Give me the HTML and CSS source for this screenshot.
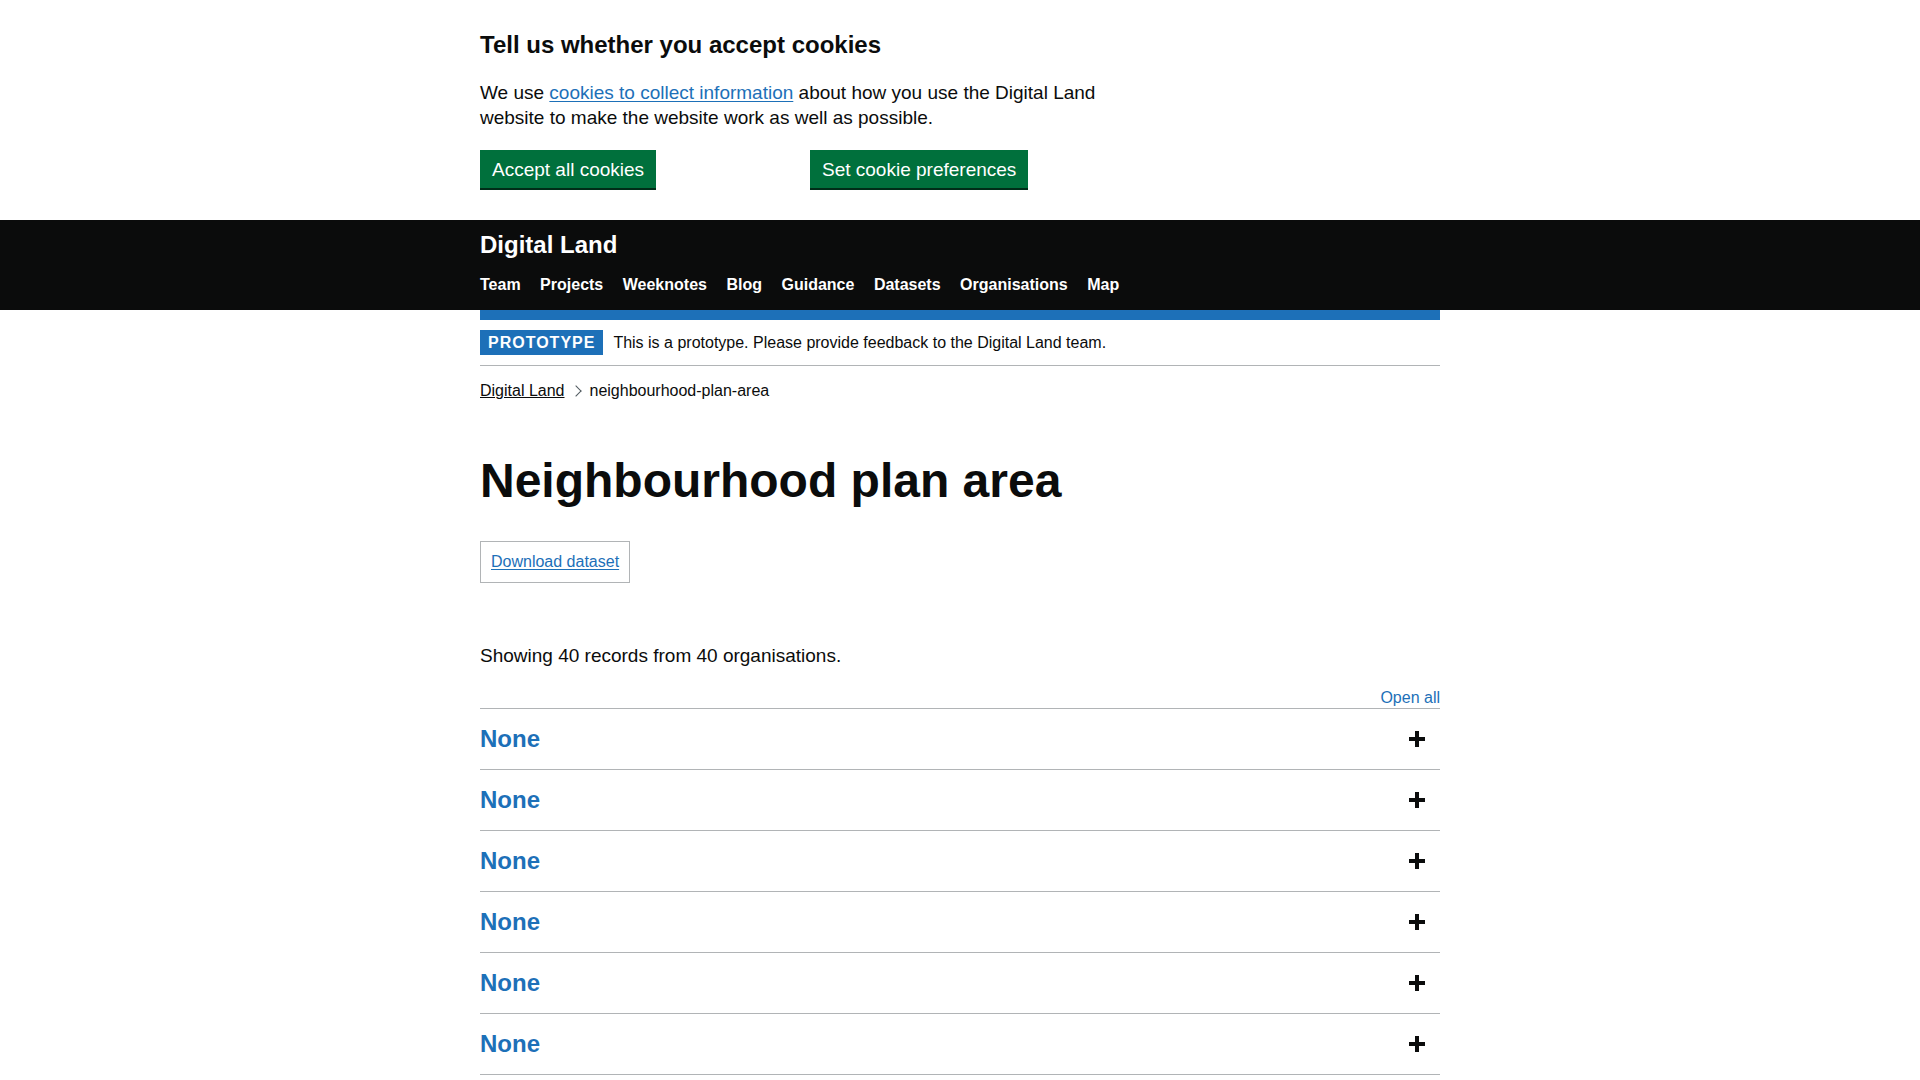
FILE: index.html
```html
<!DOCTYPE html>
<html lang="en">
<head>
<meta charset="utf-8">
<title>Neighbourhood plan area - Digital Land</title>
<link rel="stylesheet" href="styles.css">
</head>
<body>
<div class="cookie-banner">
  <div class="width-container">
    <div class="cookie-message">
      <h2 class="cookie-heading">Tell us whether you accept cookies</h2>
      <p class="body-text">We use <a class="link" href="#">cookies to collect information</a> about how you use the Digital Land website to make the website work as well as possible.</p>
    </div>
    <div class="cookie-buttons">
      <button class="button" type="button">Accept all cookies</button>
      <button class="button" type="button">Set cookie preferences</button>
    </div>
  </div>
</div>

<header class="header">
  <div class="width-container header-inner">
    <a class="product-name" href="#">Digital Land</a>
    <nav class="header-nav">
      <a href="#">Team</a>
      <a href="#">Projects</a>
      <a href="#">Weeknotes</a>
      <a href="#">Blog</a>
      <a href="#">Guidance</a>
      <a href="#">Datasets</a>
      <a href="#">Organisations</a>
      <a href="#">Map</a>
    </nav>
  </div>
</header>

<div class="width-container">
  <div class="phase-banner">
    <strong class="tag">Prototype</strong>
    <span class="phase-text">This is a prototype. Please provide feedback to the Digital Land team.</span>
  </div>

  <ol class="breadcrumbs">
    <li class="crumb"><a class="crumb-link" href="#">Digital Land</a></li>
    <li class="crumb">neighbourhood-plan-area</li>
  </ol>

  <main class="main">
    <h1 class="heading-xl">Neighbourhood plan area</h1>

    <div class="download-box"><a class="link" href="#">Download dataset</a></div>

    <p class="body-text summary">Showing 40 records from 40 organisations.</p>

    <div class="accordion">
      <div class="accordion-controls"><a class="open-all" href="#">Open all</a></div>
      <div class="accordion-section"><div class="section-header"><span class="section-title">None</span><svg class="plus" width="16" height="16" viewBox="0 0 16 16"><rect x="0" y="6" width="16" height="4"/><rect x="6" y="0" width="4" height="16"/></svg></div></div>
      <div class="accordion-section"><div class="section-header"><span class="section-title">None</span><svg class="plus" width="16" height="16" viewBox="0 0 16 16"><rect x="0" y="6" width="16" height="4"/><rect x="6" y="0" width="4" height="16"/></svg></div></div>
      <div class="accordion-section"><div class="section-header"><span class="section-title">None</span><svg class="plus" width="16" height="16" viewBox="0 0 16 16"><rect x="0" y="6" width="16" height="4"/><rect x="6" y="0" width="4" height="16"/></svg></div></div>
      <div class="accordion-section"><div class="section-header"><span class="section-title">None</span><svg class="plus" width="16" height="16" viewBox="0 0 16 16"><rect x="0" y="6" width="16" height="4"/><rect x="6" y="0" width="4" height="16"/></svg></div></div>
      <div class="accordion-section"><div class="section-header"><span class="section-title">None</span><svg class="plus" width="16" height="16" viewBox="0 0 16 16"><rect x="0" y="6" width="16" height="4"/><rect x="6" y="0" width="4" height="16"/></svg></div></div>
      <div class="accordion-section"><div class="section-header"><span class="section-title">None</span><svg class="plus" width="16" height="16" viewBox="0 0 16 16"><rect x="0" y="6" width="16" height="4"/><rect x="6" y="0" width="4" height="16"/></svg></div></div>
      <div class="accordion-section"><div class="section-header"><span class="section-title">None</span><svg class="plus" width="16" height="16" viewBox="0 0 16 16"><rect x="0" y="6" width="16" height="4"/><rect x="6" y="0" width="4" height="16"/></svg></div></div>
      <div class="accordion-section"><div class="section-header"><span class="section-title">None</span><svg class="plus" width="16" height="16" viewBox="0 0 16 16"><rect x="0" y="6" width="16" height="4"/><rect x="6" y="0" width="4" height="16"/></svg></div></div>
    </div>
  </main>
</div>
</body>
</html>
```

FILE: styles.css
```css
* { box-sizing: border-box; }

html, body {
  margin: 0;
  padding: 0;
  background: #ffffff;
}

body {
  font-family: "Liberation Sans", Arial, sans-serif;
  color: #0b0c0c;
}

.width-container {
  width: 960px;
  margin: 0 auto;
}

.link {
  color: #1d70b8;
  text-decoration: underline;
  text-decoration-thickness: 1px;
  text-underline-offset: 0.1em;
}

.body-text {
  font-size: 19px;
  line-height: 25px;
  margin: 0;
}

/* Cookie banner */
.cookie-banner {
  padding: 30px 0 30px;
  background: #ffffff;
}

.cookie-message {
  width: 640px;
}

.cookie-heading {
  font-size: 24px;
  line-height: 30px;
  font-weight: 700;
  margin: 0 0 20px;
}

.cookie-message .body-text {
  margin-bottom: 20px;
}

.cookie-buttons {
  display: grid;
  grid-template-columns: repeat(3, 1fr);
  column-gap: 30px;
  justify-items: start;
}

.button {
  font-family: "Liberation Sans", Arial, sans-serif;
  font-size: 19px;
  line-height: 1;
  color: #ffffff;
  background: #00703c;
  border: 2px solid transparent;
  border-radius: 0;
  padding: 8px 10px 7px;
  box-shadow: 0 2px 0 #002d18;
  margin: 0 0 2px;
  cursor: pointer;
}

/* Header */
.header {
  background: #0b0c0c;
  color: #ffffff;
}

.header-inner {
  padding: 10px 0 15px;
  display: flex;
  flex-direction: column;
  align-items: flex-start;
  gap: 15px;
}

.product-name {
  color: #ffffff;
  text-decoration: none;
  font-size: 24px;
  line-height: 30px;
  font-weight: 700;
}

.header-nav {
  display: flex;
  gap: 19.5px;
}

.header-nav a {
  color: #ffffff;
  text-decoration: none;
  font-size: 16px;
  line-height: 20px;
  font-weight: 700;
}

/* Phase banner */
.phase-banner {
  border-top: 10px solid #1d70b8;
  border-bottom: 1px solid #b1b4b6;
  padding: 10px 0;
  display: flex;
  align-items: center;
  gap: 10px;
}

.tag {
  display: inline-block;
  background: #1d70b8;
  color: #ffffff;
  font-size: 16px;
  line-height: 16px;
  font-weight: 700;
  letter-spacing: 1px;
  text-transform: uppercase;
  padding: 5px 8px 4px;
}

.phase-text {
  font-size: 16px;
  line-height: 20px;
}

/* Breadcrumbs */
.breadcrumbs {
  list-style: none;
  margin: 15px 0 0;
  padding: 0;
  display: flex;
  font-size: 16px;
  line-height: 20px;
}

.crumb {
  position: relative;
}

.crumb + .crumb {
  margin-left: 10px;
  padding-left: 15px;
}

.crumb + .crumb::before {
  content: "";
  position: absolute;
  top: 0;
  bottom: 0;
  left: -3px;
  width: 7px;
  height: 7px;
  margin: auto 0;
  transform: rotate(45deg);
  border-style: solid;
  border-color: #505a5f;
  border-width: 1px 1px 0 0;
}

.crumb-link {
  color: #0b0c0c;
  text-decoration: underline;
  text-decoration-thickness: 1px;
}

/* Main */
.main {
  display: flex;
  flex-direction: column;
  align-items: flex-start;
}

.heading-xl {
  font-size: 48px;
  line-height: 50px;
  font-weight: 700;
  margin: 55px 0 35px;
}

.download-box {
  border: 1px solid #b1b4b6;
  padding: 10px;
  font-size: 16px;
  line-height: 20px;
}

.summary {
  margin: 60px 0 20px;
}

/* Accordion */
.accordion {
  align-self: stretch;
}

.accordion-controls {
  display: flex;
  justify-content: flex-end;
}

.open-all {
  color: #1d70b8;
  text-decoration: none;
  font-size: 16px;
  line-height: 20px;
}

.accordion-section {
  border-top: 1px solid #b1b4b6;
}

.accordion-section:last-child {
  border-bottom: 1px solid #b1b4b6;
}

.section-header {
  display: flex;
  align-items: center;
  justify-content: space-between;
  padding: 15px 15px 15px 0;
}

.section-title {
  color: #1d70b8;
  font-size: 24px;
  line-height: 30px;
  font-weight: 700;
}

.plus {
  display: block;
  fill: #0b0c0c;
}
```
